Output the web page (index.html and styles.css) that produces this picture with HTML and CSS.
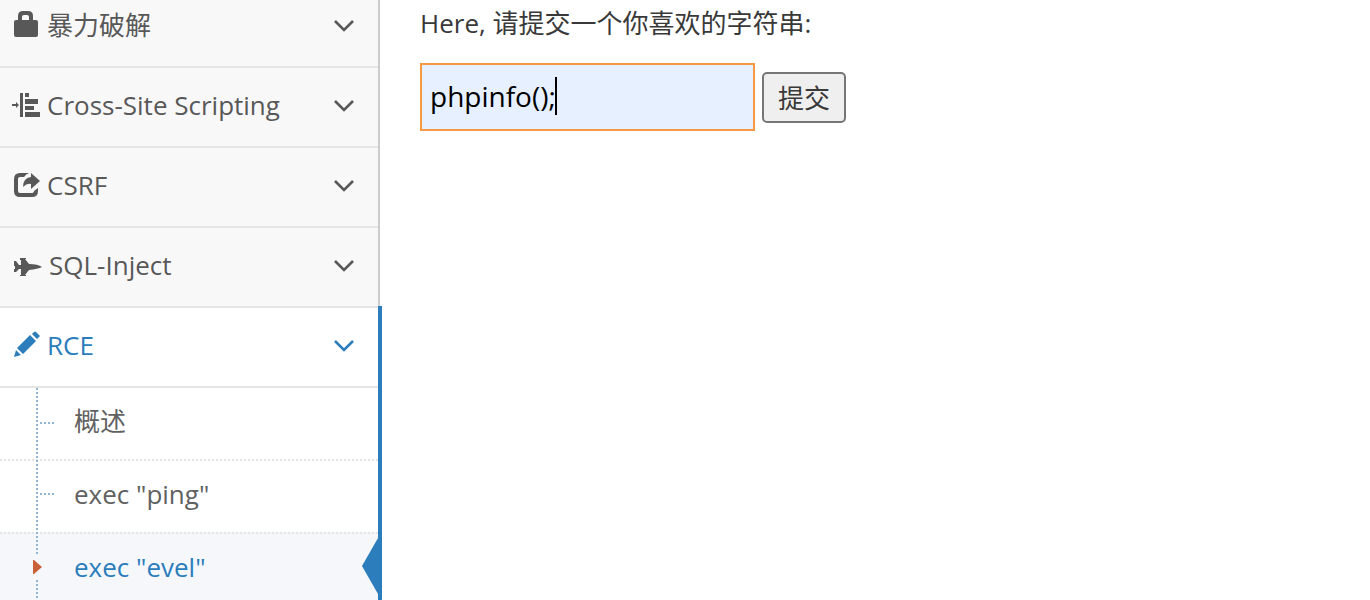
FILE: index.html
```html
<!DOCTYPE html>
<html lang="zh">
<head>
<meta charset="utf-8">
<title>RCE - exec "evel"</title>
<link rel="stylesheet" href="styles.css">
</head>
<body>
<div class="layout">
  <nav class="sidebar">
    <ul class="menu">
      <li class="menu-item">
        <a class="menu-link menu-link-first" href="#">
          <svg class="icon" viewBox="0 0 30 30"><path fill-rule="evenodd" d="M4 12q0-2 2-2h2V6q0-5 5-5h5q5 0 5 5v4h3q2 0 2 2v13q0 2-2 2H6q-2 0-2-2zm8-2h7V7q0-2-2-2h-3q-2 0-2 2z"/></svg>
          <span class="label">暴力破解</span>
          <svg class="chevron" viewBox="0 0 22 14"><path d="M2 3l9 9 9-9"/></svg>
        </a>
      </li>
      <li class="menu-item">
        <a class="menu-link" href="#">
          <svg class="icon" viewBox="0 0 30 30"><path d="M2 14h4v-2l3 3-3 3v-2H2zM10 3h3v24h-3zM15 3h4v4h-4zM15 9h13v5H15zM15 16h9v4h-9zM15 22h15v5H15z"/></svg>
          <span class="label">Cross-Site Scripting</span>
          <svg class="chevron" viewBox="0 0 22 14"><path d="M2 3l9 9 9-9"/></svg>
        </a>
      </li>
      <li class="menu-item">
        <a class="menu-link" href="#">
          <svg class="icon" viewBox="0 0 30 30"><path d="M19 3h-9q-6 0-6 6v12q0 6 6 6h12q6 0 6-6v-3l-4 3q0 2-3 2H10q-2 0-2-2V9q0-2 2-2h4q2-3 5-4zM21 3l9 8-9 8v-5q-4-1-8 3 0-9 8-10z"/></svg>
          <span class="label">CSRF</span>
          <svg class="chevron" viewBox="0 0 22 14"><path d="M2 3l9 9 9-9"/></svg>
        </a>
      </li>
      <li class="menu-item">
        <a class="menu-link" href="#">
          <svg class="icon icon-wide" viewBox="0 0 32 30"><path d="M4 11h2l3 4h2v-5h-1V8h6v1h-1l4 5q9 0 13 3-4 2-13 3l-4 5h1v1h-6v-1h1v-6H9l-3 3H4v-3h1v-3H4z"/></svg>
          <span class="label">SQL-Inject</span>
          <svg class="chevron" viewBox="0 0 22 14"><path d="M2 3l9 9 9-9"/></svg>
        </a>
      </li>
      <li class="menu-item open">
        <a class="menu-link" href="#">
          <svg class="icon" viewBox="0 0 30 30"><path d="M4 27l2-7 5 5zM7 18L20 5l6 6-13 13zM22 4l2-2q1-1 2 0l4 4-3 3z"/></svg>
          <span class="label">RCE</span>
          <svg class="chevron" viewBox="0 0 22 14"><path d="M2 3l9 9 9-9"/></svg>
        </a>
        <ul class="submenu">
          <li class="sub-item"><a class="sub-link" href="#">概述</a></li>
          <li class="sub-item"><a class="sub-link" href="#">exec "ping"</a></li>
          <li class="sub-item current">
            <a class="sub-link" href="#">exec "evel"</a>
            <svg class="marker" viewBox="0 0 12 26"><path d="M1 6h1l8 7-8 7H1z"/></svg>
            <svg class="pointer" viewBox="0 0 16 56"><path d="M16 0v56L0 28z"/></svg>
          </li>
        </ul>
      </li>
    </ul>
  </nav>
  <main class="content">
    <form class="form">
      <label class="prompt" for="txt">Here, 请提交一个你喜欢的字符串:</label>
      <div class="controls">
        <div class="field">
          <input class="text-input" id="txt" type="text" value="phpinfo();">
          <span class="caret"></span>
        </div>
        <button class="submit" type="button">提交</button>
      </div>
    </form>
  </main>
</div>
</body>
</html>
```
FILE: styles.css
```css
* {
  box-sizing: border-box;
}

body {
  margin: 0;
  background: #fff;
  color: #393939;
  font-family: "Open Sans", "Noto Sans CJK SC", sans-serif;
  font-size: 26px;
}

.layout {
  display: flex;
  height: 100vh;
  overflow: hidden;
}

.sidebar {
  flex: none;
  width: 380px;
  border-right: 2px solid #ccc;
  background: #f8f8f8;
}

.menu,
.submenu {
  margin: 0;
  padding: 0;
  list-style: none;
}

.menu-item {
  position: relative;
  border-top: 2px solid #e5e5e5;
}

.menu-item:first-child {
  border-top: 0;
}

.menu-link {
  display: flex;
  align-items: center;
  height: 78px;
  padding: 0 23px 4px 10px;
  color: #585858;
  text-decoration: none;
}

.menu-link-first {
  height: 66px;
  padding-bottom: 16px;
}

.icon {
  flex: none;
  width: 30px;
  height: 30px;
  margin-right: 7px;
  fill: currentColor;
}

.icon-wide {
  width: 32px;
}

.label {
  flex: 1;
  line-height: 36px;
}

.chevron {
  width: 22px;
  height: 14px;
  fill: none;
  stroke: currentColor;
  stroke-width: 2.6;
}

.open {
  background: #fff;
}

.open .menu-link {
  color: #2b7dbc;
}

.open::after {
  content: "";
  position: absolute;
  top: -2px;
  right: -4px;
  bottom: 0;
  width: 4px;
  background: #2b7dbc;
}

.submenu {
  position: relative;
  border-top: 2px solid #e5e5e5;
}

.submenu::before {
  content: "";
  position: absolute;
  top: 0;
  bottom: 0;
  left: 36px;
  z-index: 1;
  width: 2px;
  background: repeating-linear-gradient(#8fb6d6 0 2px, transparent 2px 4px);
}

.sub-item {
  position: relative;
  border-top: 2px dotted #e4e4e4;
}

.sub-item:first-child {
  border-top: 0;
}

.sub-item::before {
  content: "";
  position: absolute;
  top: 32px;
  left: 40px;
  width: 14px;
  height: 2px;
  background: repeating-linear-gradient(90deg, #8fb6d6 0 2px, transparent 2px 4px);
}

.sub-item:first-child::before {
  top: 34px;
}

.sub-link {
  display: block;
  padding: 15px 16px 20px 74px;
  color: #616161;
  line-height: 36px;
  text-decoration: none;
}

.current {
  background: #f5f7fb;
}

.current::before {
  display: none;
}

.current .sub-link {
  color: #2b7dbc;
}

.marker {
  position: absolute;
  top: 20px;
  left: 32px;
  z-index: 2;
  width: 12px;
  height: 26px;
  background: #f5f7fb;
  fill: #c86139;
}

.pointer {
  position: absolute;
  top: 4px;
  right: 0;
  width: 16px;
  height: 56px;
  fill: #2b7dbc;
}

.content {
  flex: 1;
  padding: 5px 40px;
}

.prompt {
  display: block;
  margin-bottom: 22px;
  line-height: 36px;
}

.controls {
  display: flex;
  align-items: center;
  gap: 7px;
}

.field {
  position: relative;
}

.text-input {
  display: block;
  width: 335px;
  height: 68px;
  padding: 0 8px 2px;
  border: 2px solid #f59942;
  border-radius: 0;
  outline: 0;
  background: #e6f0ff;
  color: #000;
  font: inherit;
  font-size: 28px;
}

.caret {
  position: absolute;
  top: 14px;
  left: 135px;
  width: 2px;
  height: 38px;
  background: #000;
}

.submit {
  height: 51px;
  padding: 0 14px;
  border: 2px solid #767676;
  border-radius: 5px;
  background: #efefef;
  color: #393939;
  font: inherit;
}
```
